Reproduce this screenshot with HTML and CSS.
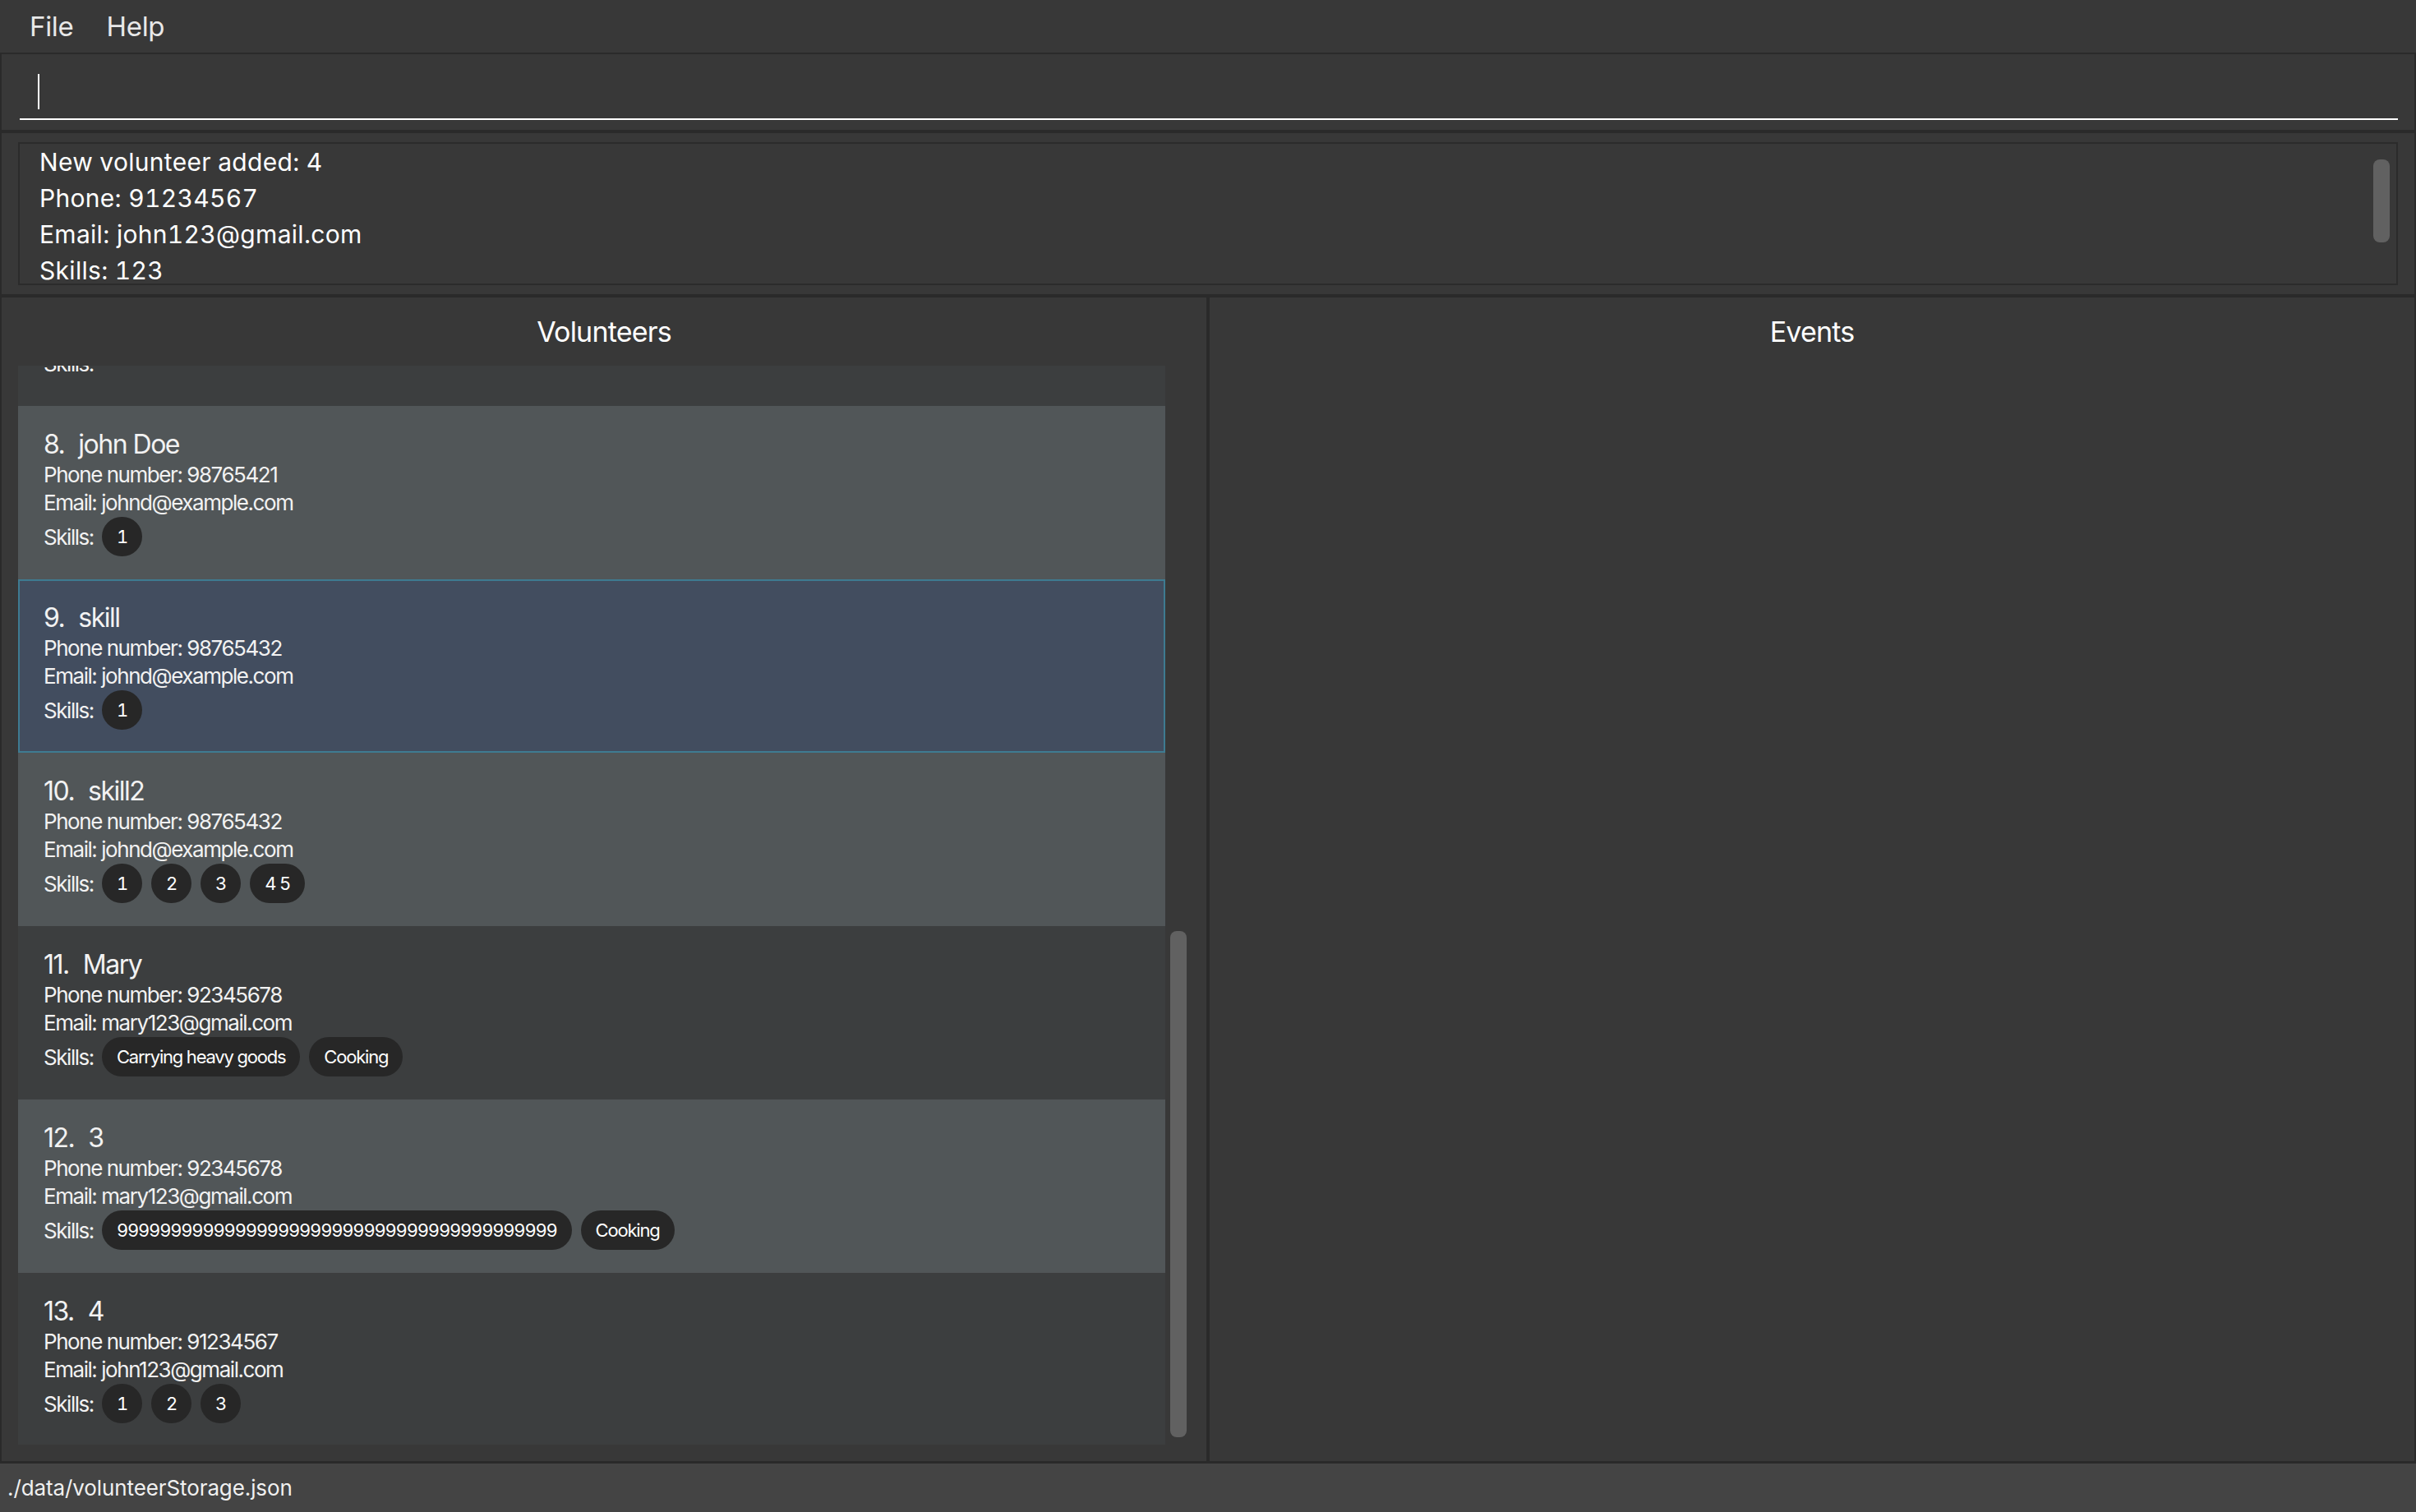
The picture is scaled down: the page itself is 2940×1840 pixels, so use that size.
FILE: index.html
```html
<!DOCTYPE html>
<html lang="en">
<head>
<meta charset="utf-8">
<title>Volunteer Manager</title>
<link rel="stylesheet" href="styles.css">
</head>
<body>
<div class="app">
  <div class="menubar">
    <span class="menu-item">File</span>
    <span class="menu-item">Help</span>
  </div>
  <div class="middle">
    <div class="command-pane">
      <div class="command-field"><span class="caret"></span></div>
    </div>
    <div class="result-pane">
      <div class="result-box">
        <div class="result-text">
          <div>New volunteer added: 4</div>
          <div>Phone: 91234567</div>
          <div>Email: john123@gmail.com</div>
          <div>Skills: 123</div>
        </div>
        <div class="vscroll result-scroll"><div class="thumb"></div></div>
      </div>
    </div>
    <div class="main">
      <section class="panel">
        <div class="panel-header">Volunteers</div>
        <div class="list-wrap">
          <div class="list">
            <div class="card dark partial">
              <div class="name">&nbsp;</div>
              <div class="info">&nbsp;</div>
              <div class="info">&nbsp;</div>
              <div class="skills"><span class="skills-label">Skills:</span></div>
            </div>
            <div class="card light">
              <div class="name"><span class="id">8.</span>john Doe</div>
              <div class="info">Phone number: 98765421</div>
              <div class="info">Email: johnd@example.com</div>
              <div class="skills"><span class="skills-label">Skills:</span><span class="chip">1</span></div>
            </div>
            <div class="card selected">
              <div class="name"><span class="id">9.</span>skill</div>
              <div class="info">Phone number: 98765432</div>
              <div class="info">Email: johnd@example.com</div>
              <div class="skills"><span class="skills-label">Skills:</span><span class="chip">1</span></div>
            </div>
            <div class="card light">
              <div class="name"><span class="id">10.</span>skill2</div>
              <div class="info">Phone number: 98765432</div>
              <div class="info">Email: johnd@example.com</div>
              <div class="skills"><span class="skills-label">Skills:</span><span class="chip">1</span><span class="chip">2</span><span class="chip">3</span><span class="chip">4 5</span></div>
            </div>
            <div class="card dark">
              <div class="name"><span class="id">11.</span>Mary</div>
              <div class="info">Phone number: 92345678</div>
              <div class="info">Email: mary123@gmail.com</div>
              <div class="skills"><span class="skills-label">Skills:</span><span class="chip">Carrying heavy goods</span><span class="chip">Cooking</span></div>
            </div>
            <div class="card light">
              <div class="name"><span class="id">12.</span>3</div>
              <div class="info">Phone number: 92345678</div>
              <div class="info">Email: mary123@gmail.com</div>
              <div class="skills"><span class="skills-label">Skills:</span><span class="chip">99999999999999999999999999999999999999999</span><span class="chip">Cooking</span></div>
            </div>
            <div class="card dark">
              <div class="name"><span class="id">13.</span>4</div>
              <div class="info">Phone number: 91234567</div>
              <div class="info">Email: john123@gmail.com</div>
              <div class="skills"><span class="skills-label">Skills:</span><span class="chip">1</span><span class="chip">2</span><span class="chip">3</span></div>
            </div>
          </div>
          <div class="vscroll list-scroll"><div class="thumb" style="margin-top:688px;height:616px"></div></div>
        </div>
      </section>
      <section class="panel">
        <div class="panel-header">Events</div>
      </section>
    </div>
  </div>
  <div class="status">./data/volunteerStorage.json</div>
</div>
</body>
</html>
```
FILE: styles.css
```css
* { box-sizing: border-box; }
html, body { margin: 0; padding: 0; }
body {
  width: 2940px;
  height: 1840px;
  overflow: hidden;
  background: #383838;
  font-family: Inter, "Noto Sans", sans-serif;
  color: #ffffff;
}
.app { display: flex; flex-direction: column; height: 1840px; }

.menubar {
  height: 64px;
  flex: none;
  display: flex;
  align-items: center;
  padding-left: 16px;
  background: #383838;
}
.menu-item {
  font-size: 33px;
  line-height: 64px;
  padding: 0 20px;
  color: #e8e8e8;
  letter-spacing: -0.3px;
}

.middle {
  flex: 1;
  min-height: 0;
  background: #2a2a2a;
  padding: 2px 2px 3px;
  display: flex;
  flex-direction: column;
  gap: 4px;
}

.command-pane {
  height: 92px;
  flex: none;
  background: #383838;
  padding: 14px 20px 0 22px;
}
.command-field {
  height: 66px;
  border-bottom: 2px solid #ffffff;
  padding: 10px 0 0 22px;
}
.caret { display: block; width: 2px; height: 43px; background: #ffffff; }

.result-pane {
  height: 196px;
  flex: none;
  background: #383838;
  padding: 11px 20px;
}
.result-box {
  height: 174px;
  border: 2px solid #2b2b2b;
  display: flex;
  overflow: hidden;
}
.result-text {
  flex: 1;
  padding-left: 24px;
  font-size: 30px;
  line-height: 44px;
  overflow: hidden;
  letter-spacing: 0.3px;
  font-variant-numeric: tabular-nums;
}
.vscroll { width: 20px; flex: none; }
.result-scroll { margin-right: 8px; padding-top: 19px; }
.thumb { width: 20px; background: #616161; border-radius: 8px; }
.result-scroll .thumb { height: 101px; }

.main { flex: 1; min-height: 0; display: flex; gap: 4px; }
.panel {
  flex: 1;
  min-width: 0;
  background: #383838;
  display: flex;
  flex-direction: column;
}
.panel-header {
  flex: none;
  height: 83px;
  line-height: 83px;
  text-align: center;
  font-size: 34px;
  letter-spacing: -0.8px;
}
.list-wrap {
  flex: 1;
  min-height: 0;
  display: flex;
  padding: 0 0 20px 20px;
}
.list { width: 1396px; flex: none; overflow: hidden; }
.list-scroll { margin-left: 6px; }

.card {
  padding: 27px 0 28px 31px;
  color: #f2f2f2;
}
.card.dark { background: #3c3e3f; }
.card.light { background: #515658; }
.card.selected { background: #424d5f; box-shadow: inset 0 0 0 2px #3e7b91; }
.card.partial { margin-top: -162px; }

.name { font-size: 32px; line-height: 40px; height: 40px; letter-spacing: -1.5px; white-space: nowrap; }
.id { margin-right: 17px; }
.info { font-size: 26px; line-height: 34px; height: 34px; letter-spacing: -1.45px; white-space: nowrap; }
.skills {
  display: flex;
  align-items: center;
  gap: 11px;
  height: 48px;
  font-size: 26px;
  letter-spacing: -1.45px;
}
.skills-label { margin-right: -1px; }
.chip {
  height: 48px;
  line-height: 48px;
  padding: 0 18px;
  border-radius: 24px;
  background: #272727;
  font-size: 22px;
  color: #ffffff;
  letter-spacing: -1.2px;
  font-variant-numeric: tabular-nums;
  white-space: nowrap;
}

.status {
  flex: none;
  height: 59px;
  line-height: 59px;
  background: #444444;
  padding-left: 9px;
  font-size: 26px;
  letter-spacing: -0.1px;
  color: #f0f0f0;
}
```
